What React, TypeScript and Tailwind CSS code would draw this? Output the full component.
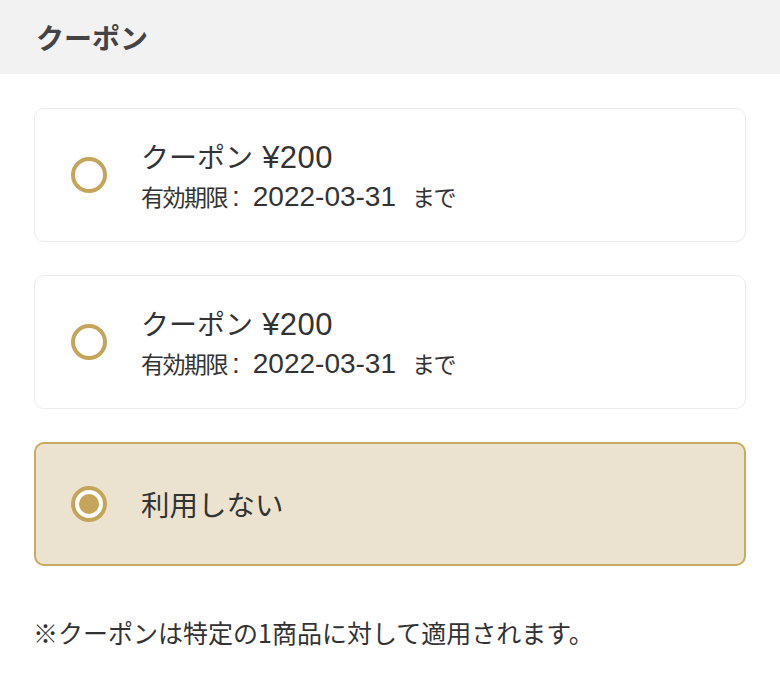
import React from "react";

const font = { fontFamily: '"Noto Sans CJK JP", "Noto Sans", sans-serif' };

// Latin runs are set in an Arial-width face, a touch larger than the kana around them
const Latin = ({ children, className }: { children: React.ReactNode; className: string }) => (
  <span className={`font-['Liberation_Sans',sans-serif] leading-none ${className}`}>{children}</span>
);

const Radio = ({ checked }: { checked?: boolean }) => (
  <span className="flex h-[36px] w-[36px] shrink-0 items-center justify-center rounded-full border-[4px] border-[#c4a55a] bg-white">
    {checked && <span className="h-[20px] w-[20px] rounded-full bg-[#c4a55a]" />}
  </span>
);

const CouponCard = () => (
  <div className="flex h-[134px] items-center rounded-[10px] border border-[#ececec] bg-white pl-[36px]">
    <Radio />
    <div className="ml-[34px] flex flex-col gap-[6px] text-[#333]">
      <span className="text-[28px] leading-[36px]">
        クーポン<Latin className="text-[31px] tracking-[0.5px]"> ¥200</Latin>
      </span>
      <span className="text-[23px] leading-[32px] tracking-[-1.5px]">
        有効期限
        <Latin className="ml-[5px] text-[28px] tracking-normal">:</Latin>
        <Latin className="ml-[13px] text-[28px] tracking-normal">2022-03-31</Latin>
        <span className="ml-[16px]">まで</span>
      </span>
    </div>
  </div>
);

export default function App() {
  return (
    <div className="h-[681px] w-[780px] bg-white" style={font}>
      <div className="flex h-[74px] items-center bg-[#f2f2f2] px-[36px]">
        <h2 className="text-[28px] font-bold text-[#444]">クーポン</h2>
      </div>
      <div className="flex flex-col gap-[33px] px-[34px] pt-[34px]">
        <CouponCard />
        <CouponCard />
        <div className="flex h-[124px] items-center rounded-[10px] border-2 border-[#c8aa62] bg-[#ebe3cf] pl-[35px]">
          <Radio checked />
          <span className="ml-[34px] text-[28.5px] text-[#333]">利用しない</span>
        </div>
      </div>
      <p className="mt-[48px] px-[33px] text-[25px] leading-[36px] text-[#333]">
        ※クーポンは特定の1商品に対して適用されます。
      </p>
    </div>
  );
}
